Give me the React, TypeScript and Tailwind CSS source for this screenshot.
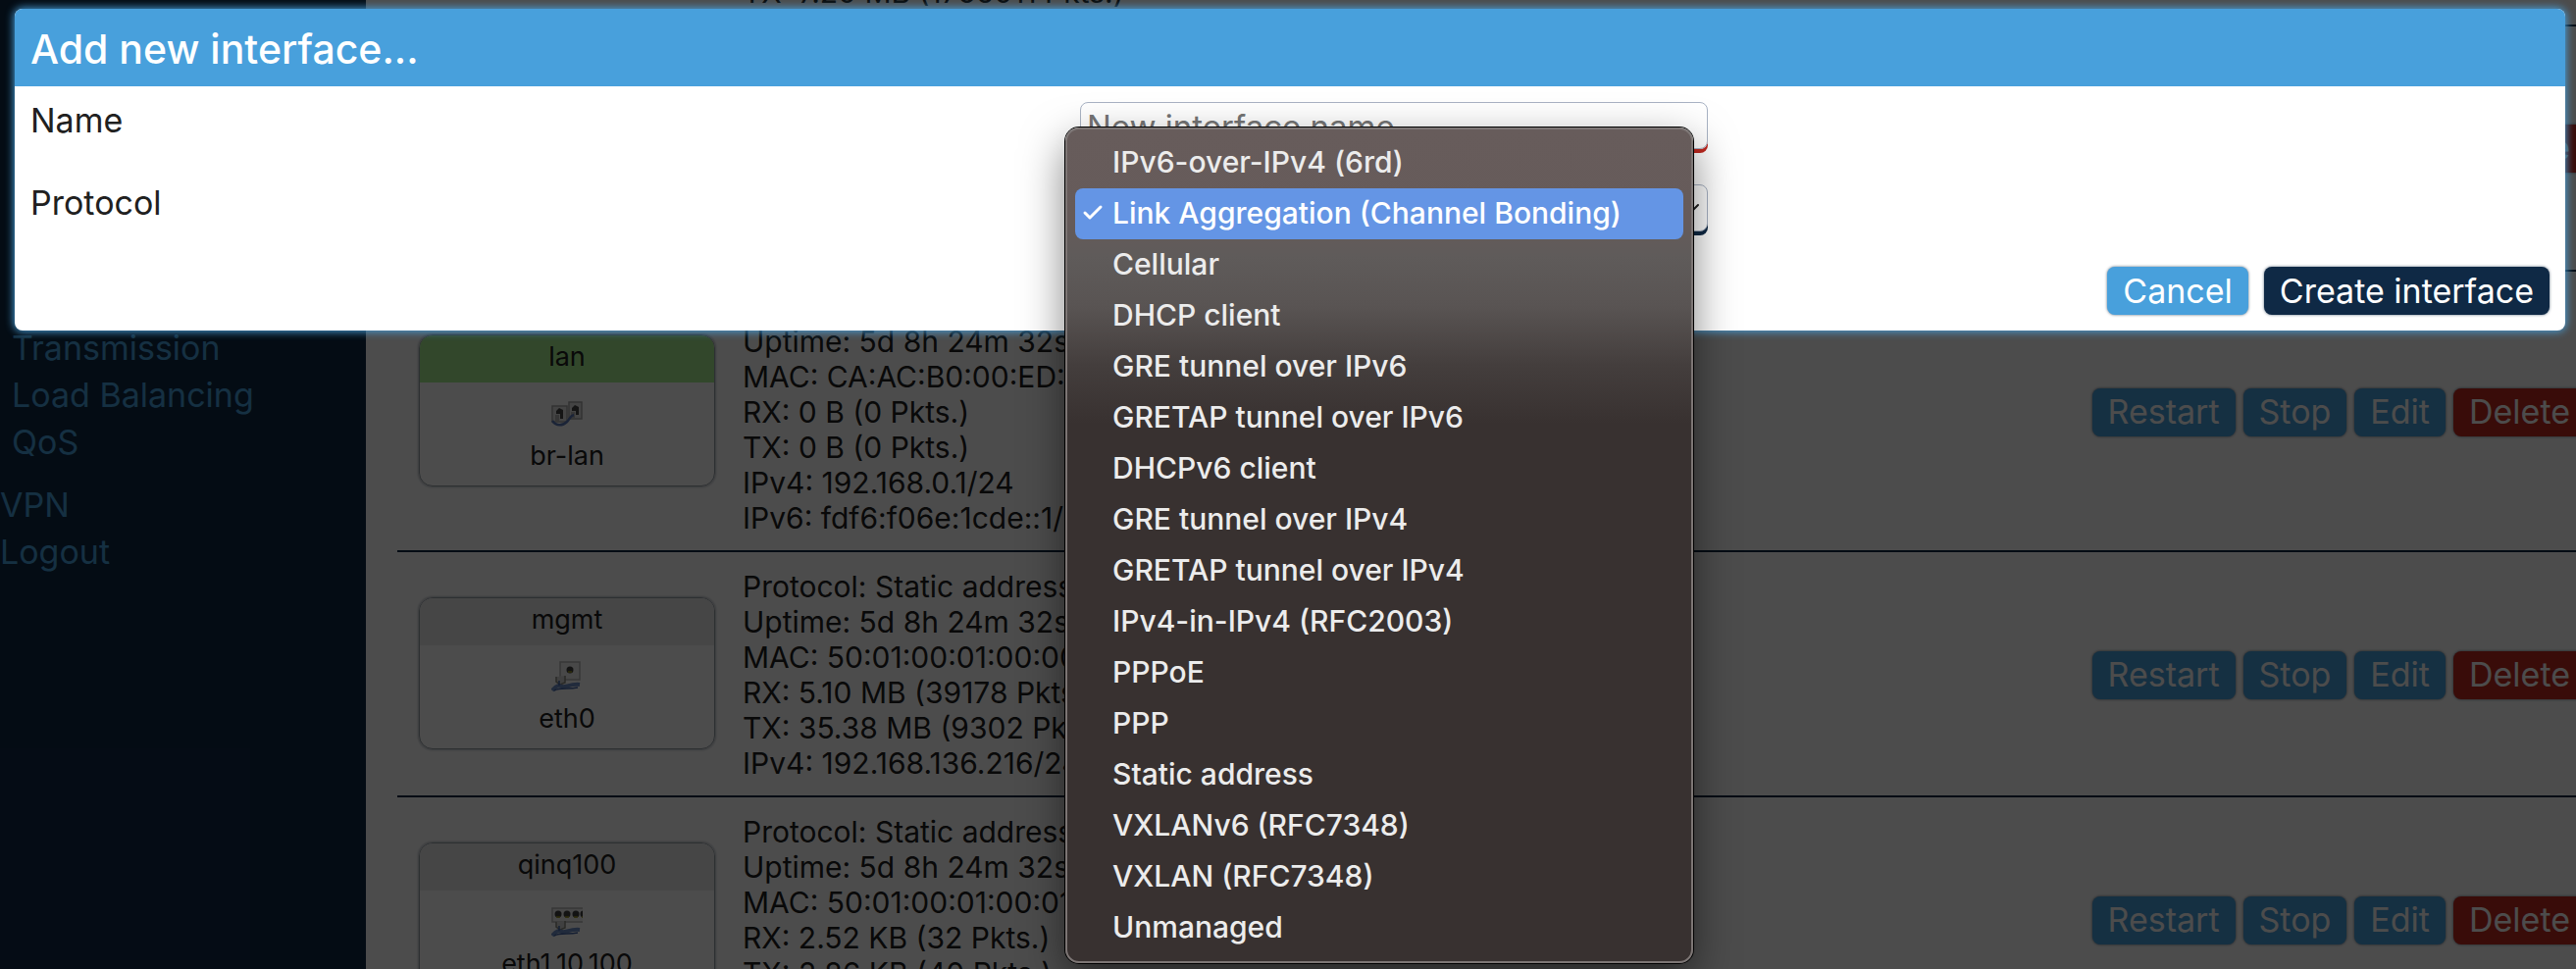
import React, { useState } from 'react';
import { Check, ChevronDown } from 'lucide-react';

const navItems = ['Transmission', 'Load Balancing', 'QoS'];

const protocols = [
  'IPv6-over-IPv4 (6rd)',
  'Link Aggregation (Channel Bonding)',
  'Cellular',
  'DHCP client',
  'GRE tunnel over IPv6',
  'GRETAP tunnel over IPv6',
  'DHCPv6 client',
  'GRE tunnel over IPv4',
  'GRETAP tunnel over IPv4',
  'IPv4-in-IPv4 (RFC2003)',
  'PPPoE',
  'PPP',
  'Static address',
  'VXLANv6 (RFC7348)',
  'VXLAN (RFC7348)',
  'Unmanaged',
];

type Iface = {
  name: string;
  device: string;
  kind: 'bridge' | 'ethernet' | 'vlan';
  active?: boolean;
  stats: string[];
};

const interfaces: Iface[] = [
  {
    name: 'lan',
    device: 'br-lan',
    kind: 'bridge',
    active: true,
    stats: [
      'Protocol: Static address',
      'Uptime: 5d 8h 24m 32s',
      'MAC: CA:AC:B0:00:ED:01',
      'RX: 0 B (0 Pkts.)',
      'TX: 0 B (0 Pkts.)',
      'IPv4: 192.168.0.1/24',
      'IPv6: fdf6:f06e:1cde::1/60',
    ],
  },
  {
    name: 'mgmt',
    device: 'eth0',
    kind: 'ethernet',
    stats: [
      'Protocol: Static address',
      'Uptime: 5d 8h 24m 32s',
      'MAC: 50:01:00:01:00:00',
      'RX: 5.10 MB (39178 Pkts.)',
      'TX: 35.38 MB (9302 Pkts.)',
      'IPv4: 192.168.136.216/24',
    ],
  },
  {
    name: 'qinq100',
    device: 'eth1.10.100',
    kind: 'vlan',
    stats: [
      'Protocol: Static address',
      'Uptime: 5d 8h 24m 32s',
      'MAC: 50:01:00:01:00:01',
      'RX: 2.52 KB (32 Pkts.)',
      'TX: 2.86 KB (40 Pkts.)',
      'IPv4: 10.0.100.1/24',
    ],
  },
];

function Cable() {
  return (
    <>
      <path d="M5 16v5l4 3 5-2v-7" fill="#d8d8d8" stroke="#8a8a80" strokeWidth="1.5" />
      <path d="M1 30c5-6 7-5 10-4s9-3 18-2" fill="none" stroke="#6f8fc8" strokeWidth="4" />
      <path d="M3 30c6-3 14-1 24-3M8 20v5" fill="none" stroke="#4467a8" strokeWidth="1.5" />
    </>
  );
}

function DeviceIcon({ kind }: { kind: Iface['kind'] }) {
  return (
    <svg viewBox="0 0 32 32" className="w-8 h-8" aria-hidden="true">
      {kind === 'bridge' && (
        <>
          <rect x="1" y="8" width="15" height="16" fill="#e4e4e4" stroke="#a8a8a8" strokeWidth="1.5" />
          <rect x="18" y="4" width="13" height="17" fill="#e4e4e4" stroke="#a8a8a8" strokeWidth="1.5" />
          <path d="M5 13l3-3 4 2v9H9v-5H5zM21 10l3-3 4 2v8h-3v-4h-4z" fill="#484848" />
          <path d="M4 17h4v7H4zM20 14h4v6h-4z" fill="#b4b4b4" />
          <path d="M1 23c4 6 11 5 15 1 3-3 3-6 7-7" fill="none" stroke="#5a7ab8" strokeWidth="2.5" />
        </>
      )}
      {kind === 'ethernet' && (
        <>
          <rect x="9" y="1" width="20" height="18" fill="#f0f0f0" stroke="#b8b8b8" strokeWidth="1.5" />
          <circle cx="19" cy="9" r="3.5" fill="#404040" />
          <path d="M17 11h4" stroke="#a09a20" strokeWidth="1.5" />
          <Cable />
        </>
      )}
      {kind === 'vlan' && (
        <>
          <path d="M33 2H1v14h31" fill="#f0f0f0" stroke="#b8b8b8" strokeWidth="1.5" />
          {[7, 16, 25, 33].map(cx => (
            <g key={cx}>
              <circle cx={cx} cy="8" r="3.5" fill="#404040" />
              <path d={`M${cx - 2} 11h4`} stroke="#a09a20" strokeWidth="1.5" />
            </g>
          ))}
          <Cable />
        </>
      )}
    </svg>
  );
}

const btn = 'h-[49px] px-4 rounded-lg text-[34px] leading-10 text-white whitespace-nowrap shadow-[0_0_3px_#5b6b7c]';

function RowActions() {
  return (
    <div className="flex gap-2 shrink-0 ml-auto -mr-[10px]">
      <button type="button" className={`${btn} bg-[#48a0dc]`}>Restart</button>
      <button type="button" className={`${btn} bg-[#48a0dc]`}>Stop</button>
      <button type="button" className={`${btn} bg-[#48a0dc]`}>Edit</button>
      <button type="button" className={`${btn} bg-[#c0281f]`}>Delete</button>
    </div>
  );
}

function InterfaceRow({ iface }: { iface: Iface }) {
  return (
    <div className="flex items-center border-b-2 border-[#0f2945] pt-[17px] pb-[15px] pl-[22px]">
      <div className="w-[302px] mb-1 shrink-0 rounded-[14px] border border-[#98a0a8] shadow-[0_0_3px_#7d8894] overflow-hidden text-center text-[27px] leading-9">
        <div className={`h-12 pt-1 ${iface.active ? 'bg-[#a8ee90]' : 'bg-[#e9e9e9]'}`}>{iface.name}</div>
        <div className="flex flex-col items-center pt-4 pb-3">
          <DeviceIcon kind={iface.kind} />
          <span className="mt-[9px]">{iface.device}</span>
        </div>
      </div>
      <div className="pl-7 text-[30px] leading-9">
        {iface.stats.map(s => <p key={s} className="whitespace-nowrap">{s}</p>)}
      </div>
      <RowActions />
    </div>
  );
}

export default function App() {
  const [protocol, setProtocol] = useState('Link Aggregation (Channel Bonding)');

  return (
    <div className="relative h-screen overflow-hidden bg-white text-[#202020] font-['Inter',sans-serif]">
      <div className="flex h-full">
        {/* Sidebar */}
        <nav className="w-[373px] shrink-0 bg-[#0f2945] text-[#48a0dc] text-[34px] leading-[48px] pt-[331px]">
          <ul className="pl-3 mb-4">
            {navItems.map(n => <li key={n}><a href="#">{n}</a></li>)}
          </ul>
          <a href="#" className="block">VPN</a>
          <a href="#" className="block">Logout</a>
        </nav>

        {/* Interface list, scrolled part way down */}
        <main className="flex-1 min-w-0 pl-8 -mt-[43px]">
          <div className="border-b-2 border-[#0f2945] pt-[17px] pb-[15px] pl-[352px] text-[30px] leading-9">
            <p>TX: 7.20 MB (1756011 Pkts.)</p>
          </div>
          <div className="flex items-center h-[250px] border-b-2 border-[#0f2945]">
            <RowActions />
          </div>
          {interfaces.map(i => <InterfaceRow key={i.name} iface={i} />)}
        </main>
      </div>

      {/* Modal */}
      <div className="absolute inset-0 bg-black/70 pl-[15px] pr-[11px] pt-[9px]">
        <div role="dialog" aria-labelledby="dlg-title" className="rounded-lg bg-white shadow-[0_0_8px_1px_#48a0dc]">
          <h4 id="dlg-title" className="h-[79px] rounded-t-lg bg-[#48a0dc] px-4 text-white text-[41px] leading-[82px] font-medium">
            Add new interface...
          </h4>
          <form className="p-4 text-[34px]" onSubmit={e => e.preventDefault()}>
            <div className="flex items-start mb-8">
              <label htmlFor="name" className="w-5/12 leading-[38px]">Name</label>
              <input
                id="name"
                type="text"
                placeholder="New interface name"
                className="w-[640px] h-12 mb-1 px-[6px] pt-1 text-[33px] border border-[#a9b3c4] rounded-lg shadow-[0_4px_0_#c0281f] placeholder:text-[#757575]"
              />
            </div>
            <div className="flex items-start mb-8">
              <label htmlFor="proto" className="w-5/12 leading-[38px]">Protocol</label>
              <div className="relative w-[640px]">
                <select
                  id="proto"
                  value={protocol}
                  onChange={e => setProtocol(e.target.value)}
                  className="block w-full h-12 mb-1 px-[6px] text-[33px] appearance-none bg-white border border-[#a9b3c4] rounded-lg shadow-[0_4px_0_#0f2945]"
                >
                  {protocols.map(p => <option key={p}>{p}</option>)}
                </select>
                <ChevronDown className="absolute right-1 top-3 w-6 h-6" strokeWidth={2} />

                {/* Open option list */}
                <ul
                  role="listbox"
                  aria-label="Protocol"
                  className="absolute z-10 -left-[15px] -top-[58px] w-[640px] p-2 rounded-[14px] border-2 border-[#7d7675] bg-[linear-gradient(#675c5b_0px,#665b5a_90px,#5f5b5a_130px,#595453_180px,#443e3d_240px,#383130_300px)] shadow-[0_0_0_1px_#000,0_16px_44px_rgba(0,0,0,0.5)] text-[30px] leading-[50px] font-medium text-[#ececec]"
                >
                  {protocols.map(p => (
                    <li
                      key={p}
                      role="option"
                      aria-selected={p === protocol}
                      onClick={() => setProtocol(p)}
                      className={`flex items-center h-[52px] pb-[2px] rounded-lg cursor-default whitespace-nowrap ${p === protocol ? 'bg-[#6495e5] text-white' : ''}`}
                    >
                      <span className="w-[38px] pl-[6px]">
                        {p === protocol && <Check className="w-6 h-6" strokeWidth={3} />}
                      </span>
                      {p}
                    </li>
                  ))}
                </ul>
              </div>
            </div>
            <div className="flex justify-end gap-4">
              <button type="button" className={`${btn} bg-[#48a0dc]`}>Cancel</button>
              <button type="submit" className={`${btn} bg-[#0f2945]`}>Create interface</button>
            </div>
          </form>
        </div>
      </div>
    </div>
  );
}
